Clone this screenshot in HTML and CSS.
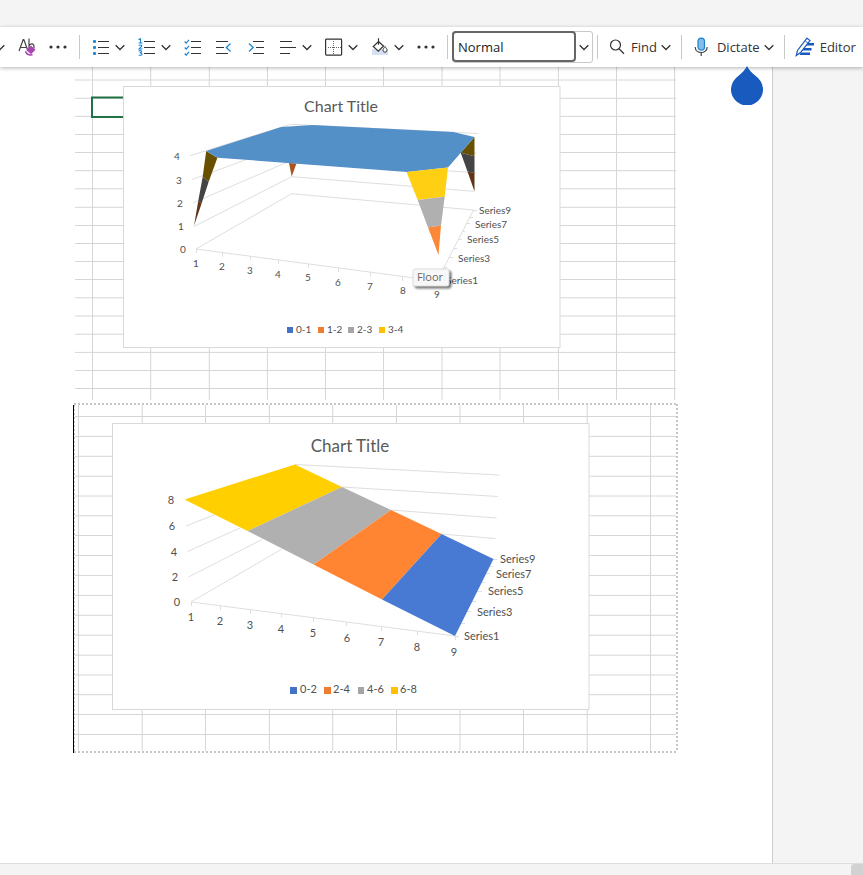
FILE: index.html
```html
<!DOCTYPE html>
<html lang="en">
<head>
<meta charset="utf-8">
<title>Document</title>
<link rel="stylesheet" href="styles.css">
</head>
<body>
<svg class="defs" aria-hidden="true">
  <symbol id="chevron" viewBox="0 0 10 18"><path d="M.7 7.2 5 11.500 9.300 7.200" fill="none" stroke="#333" stroke-width="1.300"/></symbol>
  <symbol id="dots" viewBox="0 0 18 18"><g fill="#333"><circle cx="2" cy="9" r="1.600"/><circle cx="9" cy="9" r="1.600"/><circle cx="16" cy="9" r="1.600"/></g></symbol>
</svg>
<div class="app">
  <div class="topstrip"></div>
  <div class="toolbar" role="toolbar" aria-label="Formatting">
    <div class="group">
      <button class="tool cut" aria-label="Font color options"><svg class="chev"><use href="#chevron"/></svg></button>
      <button class="tool" aria-label="Clear formatting"><svg class="icon" viewBox="0 0 18 18"><path d="M1 13 5.200 1.500h.6L10 13M2.500 9.500h6M11 .5V13M11 8C12 5 16 5 16 8.500v2" fill="none" stroke="#444" stroke-width="1.200"/><path d="m13 7.500 4.500 4.200-4.500 4.500-4.700-4.200z" fill="#a846b4"/><path d="M7.500 13.200c.6 2.500 3.500 4 7 3.600" fill="none" stroke="#a846b4" stroke-width="1.500"/></svg></button>
      <button class="tool" aria-label="More font options"><svg class="icon"><use href="#dots"/></svg></button>
    </div>
    <span class="sep"></span>
    <div class="group">
      <button class="tool" aria-label="Bullets"><svg class="icon" viewBox="0 0 18 18"><g fill="#1f86d0"><rect x="1" y="2" width="3" height="3" rx="1"/><rect x="1" y="8" width="3" height="3" rx="1"/><rect x="1" y="14" width="3" height="3" rx="1"/></g><path d="M6 3.500h11M6 9.500h11M6 15.500h11" stroke="#333"/></svg><svg class="chev"><use href="#chevron"/></svg></button>
      <button class="tool" aria-label="Numbering"><svg class="icon" viewBox="0 0 18 18"><path d="M.5 1.500 2.500.7V5M.5 5h4M.7 7.500c1.500-1 3.300-.5 3 .7L1 11H4.500M.7 12.900c3-1 4 1.600 1 1.900 3.500 0 3 3.400-1 2.200" fill="none" stroke="#1f86d0" stroke-width="1.100"/><path d="M6 3.500h11M6 9.500h11M6 15.500h11" stroke="#333"/></svg><svg class="chev"><use href="#chevron"/></svg></button>
      <button class="tool" aria-label="Checklist"><svg class="icon" viewBox="0 0 18 18"><path d="m.7 3.500 1.500 1.700L5 1.800M.7 9.500l1.500 1.700L5 7.800M.7 15.500l1.500 1.700L5 13.800" fill="none" stroke="#1f86d0" stroke-width="1.200"/><path d="M7 3.500h10M7 9.500h10M7 15.500h10" stroke="#333"/></svg></button>
      <button class="tool" aria-label="Decrease indent"><svg class="icon wide" viewBox="0 0 19 18"><path d="M1 3.500h12M1 9.500h8M1 15.500h12" stroke="#333"/><path d="M15.500 5.500 11.300 9.500l4.200 4" fill="none" stroke="#1f86d0" stroke-width="1.300"/></svg></button>
      <button class="tool" aria-label="Increase indent"><svg class="icon wide" viewBox="0 0 19 18"><path d="M6 3.500h11M9 9.500h8M6 15.500h11" stroke="#333"/><path d="M2 5.500 6.200 9.500 2 13.500" fill="none" stroke="#1f86d0" stroke-width="1.300"/></svg></button>
      <button class="tool" aria-label="Align"><svg class="icon" viewBox="0 0 18 18"><path d="M1 3.500h12M1 9.500h16M1 15.500h10" stroke="#333"/></svg><svg class="chev"><use href="#chevron"/></svg></button>
      <button class="tool" aria-label="Borders"><svg class="icon" viewBox="0 0 18 18"><rect x=".6" y="1.100" width="16" height="16" rx=".8" fill="none" stroke="#333" stroke-width="1.200"/><path d="M8.500 3v13M3 9.500h13" stroke="#666" stroke-dasharray="1 1"/></svg><svg class="chev"><use href="#chevron"/></svg></button>
      <button class="tool" aria-label="Shading"><svg class="icon" viewBox="0 0 18 18"><path fill="#d5e0f3" d="M1 11h16v6H1z"/><path d="m7.500 3.500 5 4.500-5.200 5.200-5-4.700zM7.500.5v6" fill="#fff" stroke="#333" stroke-width="1.200"/><path d="M7.500.5v6" stroke="#333"/><path d="M14 8.500c1.200 1.600 2 2.700 2 3.700a2 2 0 0 1-4 0c0-1 .8-2.100 2-3.700z" fill="#fff" stroke="#333"/></svg><svg class="chev"><use href="#chevron"/></svg></button>
      <button class="tool" aria-label="More paragraph options"><svg class="icon"><use href="#dots"/></svg></button>
    </div>
    <span class="sep"></span>
    <div class="combo">
      <input type="text" value="Normal" aria-label="Style">
      <button aria-label="Open style list"><svg class="chev"><use href="#chevron"/></svg></button>
    </div>
    <span class="sep close"></span>
    <button class="tool labelled"><svg class="icon" viewBox="0 0 18 18"><circle cx="7.500" cy="7" r="5" fill="none" stroke="#333" stroke-width="1.200"/><path d="m11 10.700 5 5" stroke="#333" stroke-width="1.300"/></svg><span>Find</span><svg class="chev"><use href="#chevron"/></svg></button>
    <span class="sep close"></span>
    <button class="tool labelled"><svg class="icon big" viewBox="0 -1 20 20"><rect x="6" y=".1" width="6.500" height="12" rx="3.200" fill="#83bdea" stroke="#1f7fc9" stroke-width="1.200"/><path d="M3.200 9c0 7.300 12 7.300 12 0M9.200 14.500V18" fill="none" stroke="#444" stroke-width="1.200"/></svg><span>Dictate</span><svg class="chev"><use href="#chevron"/></svg></button>
    <span class="sep close"></span>
    <button class="tool labelled"><svg class="icon big" viewBox="0 0 20 20"><path d="M10.500 6H19v2.500H9zM8 11h8.500v2.500H6.500zM6 15.500h9V18H4.500z" fill="#185abd"/><path d="M12 1.200 15 3.500 5.500 15.500 1.200 18.500 2.500 13.500z" fill="#fff" stroke="#185abd" stroke-width="1.200"/><path d="m10.300 4 2.700 2.300" stroke="#185abd"/></svg><span>Editor</span></button>
  </div>
  <main class="workspace">
    <article class="page">
      <svg class="droplet" viewBox="0 0 32 39" aria-hidden="true"><path d="M16 0c1.500 3.500 5 7 9 10.300A16 16 0 1 1 7 10.300C11 7 14.500 3.500 16 0z" fill="#185abd"/></svg>
      <svg class="picture" viewBox="73 67 605 334" role="img" aria-label="Surface chart with values 0 to 4">
        <path class="cells" d="M92.500 67V400M150.700 67V400M209.300 67V400M267.400 67V400M325.500 67V400M383.500 67V400M442 67V400M500 67V400M558.400 67V400M616.500 67V400M674.600 67V400M75 80H676M75 98.300H676M75 116.400H676M75 134.500H676M75 152.500H676M75 170.700H676M75 188.800H676M75 207.300H676M75 225.500H676M75 243.500H676M75 261.500H676M75 279.500H676M75 297.800H676M75 316H676M75 334.200H676M75 352.400H676M75 370.500H676M75 388.500H676"/>
        <path class="selected" d="M125 97.500H92V117H125"/>
        <rect class="frame" x="123.500" y="86.500" width="436.500" height="261"/>
        <path class="axis" d="M190 155.700 290.500 124.300 478 133.500M191.700 179.700 291 143 476.700 153M192.700 203 291 160.500 475.700 172.700M194 226.500 291.700 176.700 474 191.300M196 249 291.700 193.700 473.500 210 437 281ZM196.500 249v4M222.500 252.500v4M250.500 256v4M278.500 260v4M308.500 264v4M338.500 268v4M370.500 272.500v4M402.500 277v4M473 210.500h4M470 217.500h3M466 223.500h4M462 231.500h3M458 239.500h4M454 248.500h3M449 257.500h4M444 267.500h3"/>
        <path fill="#a8561f" d="m289 163 7.500.5-4.800 13z"/>
        <path fill="#685000" d="m206.200 151 11.200 6.700-8.700 24-6-5zM474.500 137v19.200l-13.800-3.500z"/>
        <path fill="#444" d="m202.700 176.700 6 5-7.200 22-3.200-3zM460.700 152.700l13.800 3.500V173l-7-1.500z"/>
        <path fill="#613415" d="m198.300 200.700 3.200 3-7.500 22zM467.500 171.500l7 1.500v18.500z"/>
        <path fill="#5490c8" d="m206.200 151 75-24 31-2 141 7 21.300 5-26.500 30.500-41 4.500-189.500-14.300z"/>
        <path fill="#ffcf13" d="m406.500 172 41.500-4.500-3.300 29.300-27 3.200z"/>
        <path fill="#b0b0b0" d="m417.700 200 27-3.200-3.700 28.700-13 2z"/>
        <path fill="#fb8739" d="m428 227.500 13-2-2.500 29.500z"/>
        <text class="title" x="341" y="112">Chart Title</text>
        <g class="label centered">
          <text x="177" y="160">4</text><text x="179" y="184">3</text><text x="180" y="207">2</text><text x="181" y="230">1</text><text x="183" y="253">0</text>
          <text x="196" y="267">1</text><text x="222" y="270">2</text><text x="250" y="274">3</text><text x="278" y="278">4</text><text x="308" y="281">5</text><text x="338" y="286">6</text><text x="370" y="290">7</text><text x="403" y="294">8</text><text x="437" y="298">9</text>
        </g>
        <g class="label">
          <text x="479" y="214">Series9</text><text x="475" y="228">Series7</text><text x="467" y="243">Series5</text><text x="458" y="262">Series3</text><text x="446" y="284">Series1</text>
          <text x="296" y="333">0-1</text><text x="327" y="333">1-2</text><text x="357" y="333">2-3</text><text x="388" y="333">3-4</text>
        </g>
        <path fill="#4472c4" d="M287 327h6v6h-6z"/><path fill="#ed7d31" d="M318 327h6v6h-6z"/><path fill="#a5a5a5" d="M348 327h6v6h-6z"/><path fill="#ffc000" d="M379 327h6v6h-6z"/>
        <g class="tip"><rect x="413" y="269" width="36" height="17" rx="2"/><text x="430" y="281">Floor</text></g>
      </svg>
      <svg class="picture" viewBox="73 401 605 354" role="img" aria-label="Surface chart with values 0 to 8">
        <path class="cells" d="M78.500 405V751M142.200 405V751M205.500 405V751M269.400 405V751M332.700 405V751M396.500 405V751M460 405V751M523.500 405V751M587.200 405V751M650.500 405V751M75 416.500H676M75 436.400H676M75 456.300H676M75 476.200H676M75 496H676M75 515.800H676M75 535.500H676M75 555.500H676M75 575.400H676M75 595.400H676M75 615.300H676M75 635.200H676M75 655.200H676M75 675H676M75 694.700H676M75 714.500H676M75 734.500H676"/>
        <path class="dotted" d="M74 404H678M677 404V752M74 752H678"/>
        <path class="dotted thin" d="M74.500 405V752"/>
        <path d="M73.500 405V753" stroke="#000"/>
        <rect class="frame" x="112.500" y="423.500" width="476.500" height="286"/>
        <path class="axis" d="M295 464.500 499.500 475M342 487l156 9.500M391 510l105.500 8M441 534l54.500 4.500M186 526l28-11M187.500 551.500 240 528M188.500 577 262 539.500M282 549 191 602l264 34M191.500 602v4M220.500 606v4M250.500 609.500v4M281.500 613.500v4M313.500 618v4M346.500 622v4M381.500 627v4M417.500 631v4M455.500 636v4M493 559.500h4M489 566.500h4M485 573.500h5M481 582.500h4M477 591.500h5M472 601.500h4M467 611.500h4M461 623.500h4M455 636.500h4"/>
        <path fill="#ffcf00" d="m184.500 499.500 110.500-35 47 22.500-94.500 44z"/>
        <path fill="#b0b0b0" d="m342 487 49 23-77.500 54.500-66-33.500z"/>
        <path fill="#ff8533" d="m391 510 50.500 24-59.500 65.500-68.500-35z"/>
        <path fill="#4879d3" d="m441.500 534 52 25-38.500 77-73-36.500z"/>
        <text class="title large" x="350" y="452">Chart Title</text>
        <g class="label large centered">
          <text x="171" y="504">8</text><text x="172" y="530">6</text><text x="174" y="556">4</text><text x="175" y="581">2</text><text x="177" y="606">0</text>
          <text x="191" y="621">1</text><text x="220" y="625">2</text><text x="250" y="629">3</text><text x="281" y="633">4</text><text x="313" y="637">5</text><text x="347" y="642">6</text><text x="381" y="646">7</text><text x="417" y="651">8</text><text x="454" y="656">9</text>
        </g>
        <g class="label large">
          <text x="500" y="563">Series9</text><text x="496" y="578">Series7</text><text x="488" y="595">Series5</text><text x="477" y="616">Series3</text><text x="464" y="640">Series1</text>
          <text x="300" y="693">0-2</text><text x="333" y="693">2-4</text><text x="367" y="693">4-6</text><text x="400" y="693">6-8</text>
        </g>
        <path fill="#4472c4" d="M290 687h7v7h-7z"/><path fill="#ed7d31" d="M324 687h7v7h-7z"/><path fill="#a5a5a5" d="M358 687h6v7h-6z"/><path fill="#ffc000" d="M391 687h7v7h-7z"/>
      </svg>
    </article>
  </main>
  <div class="scrollbar"><div class="thumb"></div></div>
</div>
</body>
</html>
```
FILE: styles.css
```css
* { box-sizing: border-box; }
body { margin: 0; font: 13px/18px "Open Sans", "Noto Sans", sans-serif; color: #333; background: #f4f4f4; }
.defs { display: none; }
.app { display: flex; flex-direction: column; min-height: 100vh; overflow: hidden; }
.topstrip { height: 27px; background: #f4f4f4; }
.toolbar { display: flex; align-items: center; height: 40px; background: #fff; box-shadow: 0 1px 4px rgba(0, 0, 0, .3); position: relative; z-index: 1; white-space: nowrap; }
.toolbar > * { flex: none; }
.group { display: flex; gap: 13px; align-items: center; }
.tool { display: flex; align-items: center; gap: 5px; padding: 0; border: 0; background: none; font: inherit; color: inherit; }
.labelled .chev { margin-left: -1px; }
.cut { margin-left: -5px; }
.icon { width: 18px; height: 18px; display: block; }
.icon.wide { width: 19px; }
.icon.big { width: 20px; height: 20px; }
.chev { width: 10px; height: 18px; display: block; }
.sep { width: 1px; height: 24px; margin: 0 12px; background: #c8c8c8; }
.sep.close { margin: 0 10px; }
.combo { display: flex; width: 141px; height: 32px; margin: 0 -6px 0 -8px; border: 1px solid #c8c8c8; border-radius: 3px; }
.combo input { flex: 1; min-width: 0; margin: -1px 0 0 -1px; height: 31px; padding: 0 4px; border: 2px solid #666; border-radius: 4px; background: #fff; font: inherit; color: #222; }
.combo button { display: flex; align-items: center; justify-content: center; width: 16px; padding: 0; border: 0; background: none; }

.workspace { flex: 1; display: flex; padding-right: 90px; }
.page { flex: 1; position: relative; padding-left: 73px; background: #fff; border-right: 1px solid #ccc; }
.picture { display: block; width: 605px; max-width: 100%; height: auto; }
.droplet { position: absolute; z-index: 2; top: -1px; right: 9px; width: 32px; height: 39px; }
.scrollbar { display: flex; justify-content: flex-end; height: 12px; border-top: 1px solid #ddd; background: #f4f4f4; }
.thumb { width: 12px; background: #d2d2d2; border-radius: 3px 0 0 0; }

.cells { fill: none; stroke: #d6d6d6; stroke-width: 1; }
.selected { fill: none; stroke: #217346; stroke-width: 2; }
.frame { fill: #fff; stroke: #d9d9d9; }
.axis { fill: none; stroke: #dedede; }
.dotted { fill: none; stroke: #c6c6c6; stroke-width: 2; stroke-dasharray: 2 2; }
.dotted.thin { stroke-width: 1; }
.title { font: 16px Lato, sans-serif; fill: #595959; text-anchor: middle; }
.title.large { font-size: 17px; }
.label { font: 10px Lato, sans-serif; fill: #505050; }
.label.large { font-size: 11px; }
.centered { text-anchor: middle; }
.tip rect { fill: #f7f7f7; stroke: #ddd; filter: drop-shadow(2px 2px 1px rgba(0, 0, 0, .55)); }
.tip text { font: 11px "Open Sans", sans-serif; fill: #666; text-anchor: middle; }
```
